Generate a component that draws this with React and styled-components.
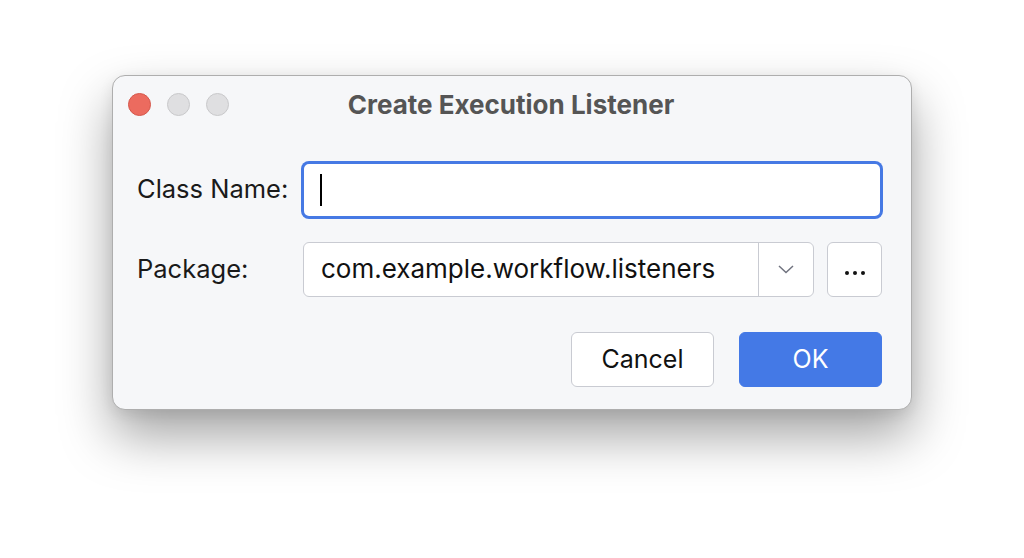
import styled, { createGlobalStyle } from "styled-components";

const Global = createGlobalStyle`
    html, body {
        margin: 0;
        background: #ffffff;
        font-family: Inter, "Noto Sans", sans-serif;
    }
`;

const Page = styled.div`
    min-height: 100vh;
    box-sizing: border-box;
    display: flex;
    justify-content: center;
    align-items: flex-start;
    padding-top: 75px;
`;

const Window = styled.div`
    width: 800px;
    height: 335px;
    box-sizing: border-box;
    background: #f6f7f9;
    border: 1px solid #aeaeae;
    border-radius: 13px;
    box-shadow: 0 26px 52px rgba(0, 0, 0, 0.36), 0 4px 14px rgba(0, 0, 0, 0.08);
    display: flex;
    flex-direction: column;
`;

const TitleBar = styled.div`
    height: 56px;
    display: flex;
    align-items: center;
    padding: 0 15px;
`;

const Lights = styled.div`
    display: flex;
    gap: 16px;
`;

const Light = styled.div`
    width: 23px;
    height: 23px;
    border-radius: 50%;
    box-sizing: border-box;
    background: ${(p) => (p.red ? "#ec6b5f" : "#dfdfe1")};
    border: 1px solid ${(p) => (p.red ? "#d5584c" : "#c9c9cb")};
`;

const Title = styled.div`
    flex: 1;
    text-align: center;
    margin-right: 103px;
    font-size: 26px;
    font-weight: 700;
    color: #555555;
`;

const Body = styled.div`
    flex: 1;
    padding: 30px 29px 0 24px;
    display: flex;
    flex-direction: column;
`;

const Row = styled.div`
    display: flex;
    align-items: center;
    margin-bottom: ${(p) => p.gap}px;
`;

const Label = styled.div`
    width: 165px;
    font-size: 25.5px;
    color: #1a1a1a;
    margin-top: -3px;
`;

const TextField = styled.div`
    flex: 1;
    height: 56px;
    box-sizing: border-box;
    background: #ffffff;
    border: 2px solid #4679e4;
    box-shadow: 0 0 0 1px #4679e4;
    border-radius: 7px;
    display: flex;
    align-items: center;
    padding-left: 16px;
`;

const Caret = styled.div`
    width: 2px;
    height: 32px;
    background: #000;
`;

const Combo = styled.div`
    flex: 1;
    height: 55px;
    box-sizing: border-box;
    background: #ffffff;
    border: 1.5px solid #c9cbd2;
    border-radius: 6px;
    display: flex;
    align-items: stretch;
    margin-left: 1px;
`;

const ComboText = styled.div`
    flex: 1;
    display: flex;
    align-items: center;
    padding-left: 17px;
    padding-bottom: 3px;
    font-size: 26px;
    color: #111;
`;

const ComboArrow = styled.div`
    width: 54px;
    border-left: 1.5px solid #c9cbd2;
    display: flex;
    align-items: center;
    justify-content: center;
`;

const SmallButton = styled.div`
    width: 55px;
    height: 55px;
    box-sizing: border-box;
    margin-left: 13px;
    background: #ffffff;
    border: 1.5px solid #c9cbd2;
    border-radius: 6px;
    display: flex;
    align-items: center;
    justify-content: center;
    gap: 4px;
    padding-top: 6px;
`;

const Dot = styled.span`
    width: 4px;
    height: 4px;
    border-radius: 50%;
    background: #111;
`;

const Buttons = styled.div`
    display: flex;
    justify-content: flex-end;
    gap: 25px;
`;

const Button = styled.div`
    width: 143px;
    height: 55px;
    box-sizing: border-box;
    border-radius: 6px;
    display: flex;
    align-items: center;
    justify-content: center;
    padding-bottom: 2px;
    font-size: 25px;
    background: ${(p) => (p.primary ? "#4479e6" : "#ffffff")};
    color: ${(p) => (p.primary ? "#ffffff" : "#111111")};
    border: 1.5px solid ${(p) => (p.primary ? "#4479e6" : "#c9cbd2")};
`;

const App = () => {
    return (
        <Page>
            <Global />
            <Window>
                <TitleBar>
                    <Lights>
                        <Light red />
                        <Light />
                        <Light />
                    </Lights>
                    <Title>Create Execution Listener</Title>
                </TitleBar>
                <Body>
                    <Row gap={24}>
                        <Label>Class Name:</Label>
                        <TextField>
                            <Caret />
                        </TextField>
                    </Row>
                    <Row gap={35}>
                        <Label>Package:</Label>
                        <Combo>
                            <ComboText>com.example.workflow.listeners</ComboText>
                            <ComboArrow>
                                <svg width="16" height="9" viewBox="0 0 16 9">
                                    <path d="M1 1 L8 7.5 L15 1" fill="none" stroke="#70737f" strokeWidth="1.5" />
                                </svg>
                            </ComboArrow>
                        </Combo>
                        <SmallButton>
                            <Dot />
                            <Dot />
                            <Dot />
                        </SmallButton>
                    </Row>
                    <Buttons>
                        <Button>Cancel</Button>
                        <Button primary>OK</Button>
                    </Buttons>
                </Body>
            </Window>
        </Page>
    );
};

export default App;
